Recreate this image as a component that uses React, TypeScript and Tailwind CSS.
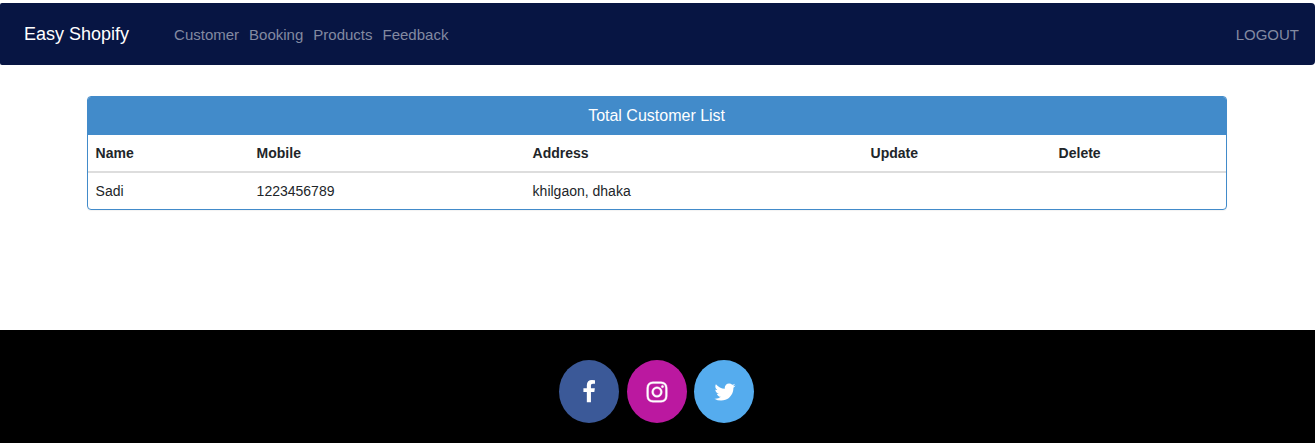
const links = ['Customer', 'Booking', 'Products', 'Feedback'];

const icons = {
  facebook:
    'M1343 12v264h-157q-86 0-116 36t-30 108v189h293l-39 296h-254v759h-306v-759h-255v-296h255v-218q0-186 104-288.500t277-102.500q147 0 228 12z',
  instagram:
    'M1152 896q0-106-75-181t-181-75-181 75-75 181 75 181 181 75 181-75 75-181zm138 0q0 164-115 279t-279 115-279-115-115-279 115-279 279-115 279 115 115 279zm108-410q0 38-27 65t-65 27-65-27-27-65 27-65 65-27 65 27 27 65zm-502-220q-7 0-76.500-.5t-105.500 0-96.500 3-103 10-71.500 18.500q-50 20-88 58t-58 88q-11 29-18.500 71.500t-10 103-3 96.500 0 105.500.5 76.500-.5 76.500 0 105.500 3 96.500 10 103 18.500 71.500q20 50 58 88t88 58q29 11 71.500 18.500t103 10 96.500 3 105.500 0 76.500-.5 76.500.5 105.500 0 96.500-3 103-10 71.500-18.500q50-20 88-58t58-88q11-29 18.500-71.500t10-103 3-96.500 0-105.500-.5-76.500.5-76.500 0-105.500-3-96.500-10-103-18.500-71.500q-20-50-58-88t-88-58q-29-11-71.500-18.500t-103-10-96.500-3-105.500 0-76.500.5zm768 630q0 229-5 317-10 208-124 322t-322 124q-88 5-317 5t-317-5q-208-10-322-124t-124-322q-5-88-5-317t5-317q10-208 124-322t322-124q88-5 317-5t317 5q208 10 322 124t124 322q5 88 5 317z',
  twitter:
    'M1684 408q-67 98-162 167 1 14 1 42 0 130-38 259.500t-115.500 248.500-184.500 210.500-258 146-323 54.500q-271 0-496-145 35 4 78 4 225 0 401-138-105-2-188-64.500t-114-159.500q33 5 61 5 43 0 85-11-112-23-185.500-111.500t-73.500-205.500v-4q68 38 146 41-66-44-105-115t-39-154q0-88 44-163 121 149 294.500 238.500t371.500 99.500q-8-38-8-74 0-134 94.500-228.500t228.500-94.500q140 0 236 102 109-21 205-78-37 115-142 178 93-10 186-50z',
};

function SocialLink({ icon, className }: { icon: keyof typeof icons; className: string }) {
  return (
    <a aria-label={icon} className={`flex h-[63px] w-[60px] items-center justify-center rounded-[50%] pt-px ${className}`}>
      <svg viewBox="0 0 1792 1792" className="size-6 fill-white stroke-white">
        <path d={icons[icon]} strokeWidth={icon === 'instagram' ? 30 : 0} />
      </svg>
    </a>
  );
}

export default function App() {
  return (
    <div className="h-[443px] overflow-hidden bg-white pt-[3px] font-['Liberation_Sans',sans-serif] text-[#212529]">
      <nav className="flex h-[62px] items-center rounded-l-[2px] rounded-r bg-[#071543] pr-4 pl-6">
        <a className="mr-[45px] text-[18px] text-white">Easy Shopify</a>
        <div className="flex gap-[10px] pt-[2px] text-[15px] text-[#838aa1]">
          {links.map((l) => <a key={l}>{l}</a>)}
        </div>
        <a className="ml-auto pt-[2px] text-[15px] text-[#838aa1]">LOGOUT</a>
      </nav>
      <main className="h-[265px] px-[86.6px] pt-[31px]">
        <section className="h-[114px] w-[1140px] overflow-hidden rounded border border-[#428bca] text-[14px] shadow-[0_1px_1px_rgba(0,0,0,0.05)]">
          <h1 className="flex h-[38px] items-center justify-center bg-[#428bca] text-[16px] text-white">Total Customer List</h1>
          <table className="w-full table-fixed border-separate border-spacing-0 text-left">
            <colgroup>
              <col className="w-[161px]" /><col className="w-[276px]" /><col className="w-[338px]" /><col className="w-[188px]" /><col />
            </colgroup>
            <thead>
              <tr className="h-[38px]">
                {['Name', 'Mobile', 'Address', 'Update', 'Delete'].map((h) => (
                  <th key={h} className="border-b-2 border-[#dddddd] px-2 font-bold">{h}</th>
                ))}
              </tr>
            </thead>
            <tbody>
              <tr className="h-[37px]">
                {['Sadi', '1223456789', 'khilgaon, dhaka', '', ''].map((v, i) => <td key={i} className="px-2">{v}</td>)}
              </tr>
            </tbody>
          </table>
        </section>
      </main>
      <footer className="flex h-[113px] justify-center gap-[7.5px] bg-black pt-[30px] pr-[2px]">
        <SocialLink icon="facebook" className="bg-[#3b5998] pr-px" />
        <SocialLink icon="instagram" className="bg-[#bb18a0]" />
        <SocialLink icon="twitter" className="bg-[#55acee] pl-px" />
      </footer>
    </div>
  );
}
